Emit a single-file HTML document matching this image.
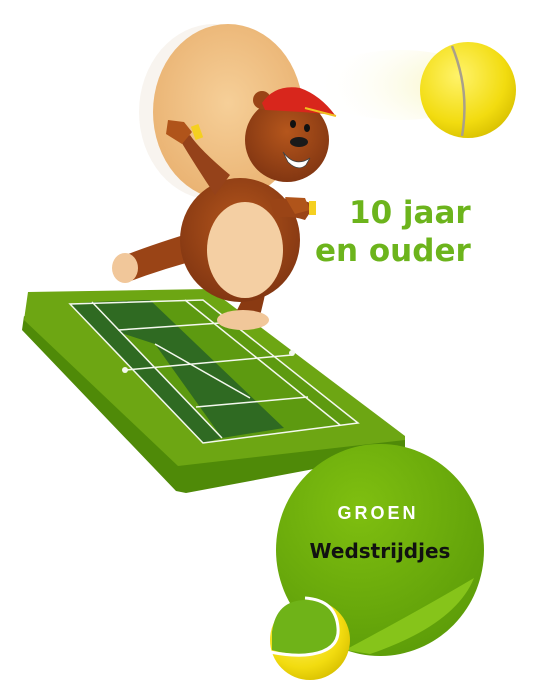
<!DOCTYPE html>
<html><head><style>
html,body{margin:0;padding:0;background:#fff;width:550px;height:696px;overflow:hidden}
svg{display:block}
</style></head><body>
<svg width="550" height="696" viewBox="0 0 550 696" xmlns="http://www.w3.org/2000/svg">
<defs>
<radialGradient id="ball" cx="0.4" cy="0.35" r="0.7"><stop offset="0" stop-color="#fff36a"/><stop offset="0.7" stop-color="#f2dc10"/><stop offset="1" stop-color="#d8c000"/></radialGradient>
<radialGradient id="glow" cx="1" cy="0.5" r="1"><stop offset="0" stop-color="#f4f0a0" stop-opacity="0.9"/><stop offset="1" stop-color="#fff" stop-opacity="0"/></radialGradient>
<radialGradient id="waf" cx="0.5" cy="0.45" r="0.6"><stop offset="0" stop-color="#f6cf98"/><stop offset="1" stop-color="#e9b170"/></radialGradient>
<radialGradient id="stk" cx="0.4" cy="0.3" r="0.8"><stop offset="0" stop-color="#7fbf10"/><stop offset="1" stop-color="#5a9a08"/></radialGradient>
<radialGradient id="fur" cx="0.5" cy="0.4" r="0.7"><stop offset="0" stop-color="#b5561c"/><stop offset="1" stop-color="#7a3110"/></radialGradient>
</defs>
<ellipse cx="214" cy="112" rx="75" ry="88" fill="#f3ede4" opacity="0.6"/>
<ellipse cx="228" cy="112" rx="75" ry="88" fill="url(#waf)"/>
<ellipse cx="400" cy="85" rx="85" ry="35" fill="url(#glow)"/>
<circle cx="468" cy="90" r="48" fill="url(#ball)"/>
<path d="M452 46 Q470 90 462 136" stroke="#a9a08a" stroke-width="2.5" fill="none"/>
<text x="349" y="223" font-family="DejaVu Sans, sans-serif" font-weight="bold" font-size="31" fill="#6cb41c">10 jaar</text>
<text x="315" y="261" font-family="DejaVu Sans, sans-serif" font-weight="bold" font-size="31" fill="#6cb41c">en ouder</text>
<polygon points="24,316 178,462 405,438 405,452 186,493 176,491 22,330" fill="#4f8a08"/>
<polygon points="28,292 210,289 405,436 405,440 178,466 24,320" fill="#6da613"/>
<polygon points="70,304 203,300 358,423 203,443" fill="#5d9a10"/>
<polygon points="92,302 150,300 284,428 222,438 155,344 118,332" fill="#2f6a22"/>
<polygon points="70,304 92,302 222,438 203,443" fill="#2f6a22"/>
<g stroke="#f4f8ee" stroke-width="1.5" fill="none">
<polygon points="70,304 203,300 358,423 203,443"/>
<line x1="92" y1="302" x2="222" y2="438"/>
<line x1="185" y1="300" x2="340" y2="425"/>
<line x1="118" y1="330" x2="235" y2="322"/>
<line x1="196" y1="407" x2="308" y2="397"/>
<line x1="155" y1="344" x2="250" y2="398"/>
<line x1="125" y1="370" x2="292" y2="355"/>
</g>
<circle cx="125" cy="370" r="3" fill="#f4f8ee"/><circle cx="292" cy="353" r="3" fill="#f4f8ee"/>
<g>
<path d="M250 270 Q245 300 232 318 L258 322 Q265 300 268 275 Z" fill="#8a3a12"/>
<ellipse cx="243" cy="320" rx="26" ry="10" fill="#f1c79a"/>
<path d="M200 230 Q150 245 118 258 Q112 272 128 282 Q165 268 205 258 Z" fill="#9a4416"/>
<ellipse cx="125" cy="268" rx="13" ry="15" fill="#f1c79a"/>
<ellipse cx="240" cy="240" rx="60" ry="62" fill="url(#fur)"/>
<ellipse cx="245" cy="250" rx="38" ry="48" fill="#f4cfa3"/>
<path d="M230 175 Q200 150 190 135 L180 140 Q195 165 215 195 Z" fill="#95421a"/>
<path d="M168 120 L184 122 L192 132 L182 144 L166 134 Z" fill="#b0541a"/>
<rect x="193" y="125" width="8" height="14" fill="#f5d020" transform="rotate(-20 197 132)"/>
<path d="M270 200 Q295 195 315 205 L305 220 Q290 215 275 218 Z" fill="#9a4416"/>
<path d="M285 197 L305 198 L310 210 L295 214 Z" fill="#b0541a"/>
<rect x="309" y="201" width="7" height="14" fill="#f5d020"/>
<circle cx="287" cy="140" r="42" fill="url(#fur)"/>
<circle cx="262" cy="100" r="9" fill="#9a4416"/>
<path d="M262 103 Q275 84 300 88 Q320 95 335 115 Q310 112 265 110 Z" fill="#d8261c"/>
<path d="M305 108 L336 116" stroke="#f0c020" stroke-width="2"/>
<ellipse cx="293" cy="124" rx="3" ry="4" fill="#111"/><ellipse cx="307" cy="128" rx="3" ry="4" fill="#111"/>
<ellipse cx="299" cy="142" rx="9" ry="5" fill="#1a1a1a"/>
<path d="M283 152 Q295 168 310 158 L306 165 Q298 172 288 162 Z" fill="#fff" stroke="#444" stroke-width="0.8"/>
</g>
<ellipse cx="380" cy="550" rx="104" ry="106" fill="url(#stk)"/>
<path d="M345 650 Q420 610 474 578 Q455 625 370 654 Z" fill="#86c41a"/>
<circle cx="310" cy="640" r="40" fill="url(#ball)"/>
<path d="M272 632 Q276 600 306 600 Q340 600 338 632 Q336 655 302 654 Q285 654 272 650 L272 632 Z" fill="#6fb318"/>
<path d="M270 652 Q290 656 305 655 Q340 652 338 628 Q336 600 305 598" stroke="#fff" stroke-width="3" fill="none"/>
<text x="378" y="519" text-anchor="middle" font-family="Liberation Sans, sans-serif" font-weight="bold" font-size="18" letter-spacing="3" fill="#fff">GROEN</text>
<text x="380" y="558" text-anchor="middle" font-family="DejaVu Sans, sans-serif" font-weight="bold" font-size="20" fill="#111">Wedstrijdjes</text>
</svg>
</body></html>
